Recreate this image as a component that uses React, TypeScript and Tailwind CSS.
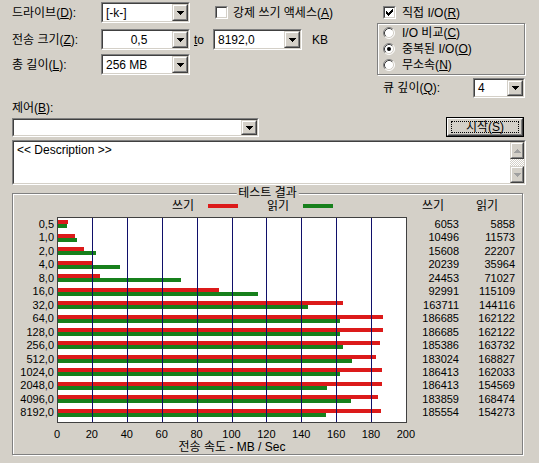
import React from "react";

const F = "font-['Liberation_Sans','Noto_Sans_CJK_KR',sans-serif]";
const SO = "border border-t-[#808080] border-l-[#808080] border-b-white border-r-white";
const SI = "border border-t-[#404040] border-l-[#404040] border-b-[#d4d0c8] border-r-[#d4d0c8]";
const RO = "border border-t-[#d4d0c8] border-l-[#d4d0c8] border-b-[#404040] border-r-[#404040]";
const RI = "border border-t-white border-l-white border-b-[#808080] border-r-[#808080]";

function DownArrow({ color = "#000" }: { color?: string }) {
  return (
    <svg width="7" height="4" viewBox="0 0 7 4" shapeRendering="crispEdges">
      <path d="M0 0h7v1h-1v1h-1v1h-1v1h-1v-1h-1v-1h-1v-1h-1z" fill={color} />
    </svg>
  );
}
function UpArrow({ color = "#000" }: { color?: string }) {
  return (
    <svg width="7" height="4" viewBox="0 0 7 4" shapeRendering="crispEdges">
      <path d="M3 0h1v1h1v1h1v1h1v1h-7v-1h1v-1h1v-1h1z" fill={color} />
    </svg>
  );
}

function DropBtn() {
  return (
    <div className={"w-[16px] h-full flex " + RO}>
      <div className={"flex-1 flex items-center justify-center bg-[#d4d0c8] " + RI}>
        <DownArrow />
      </div>
    </div>
  );
}

function Combo({ className, children, textClass = "" }: { className: string; children?: React.ReactNode; textClass?: string }) {
  return (
    <div className={SO + " " + className}>
      <div className={SI + " h-full flex bg-white"}>
        <div className={"flex-1 flex items-center pl-[3px] text-[12px] leading-none whitespace-nowrap " + textClass}>{children}</div>
        <DropBtn />
      </div>
    </div>
  );
}

function CheckBox({ checked }: { checked?: boolean }) {
  return (
    <div className={SO + " w-[13px] h-[13px] shrink-0"}>
      <div className={SI + " w-full h-full bg-white flex items-center justify-center"}>
        {checked && (
          <svg width="7" height="7" viewBox="0 0 7 7" shapeRendering="crispEdges">
            <path d="M6 0h1v1h-1zM5 1h2v1h-2zM0 2h1v1h-1zM4 2h3v1h-3zM0 3h2v1h-2zM3 3h3v1h-3zM0 4h5v1h-5zM1 5h3v1h-3zM2 6h1v1h-1z" fill="#000" />
          </svg>
        )}
      </div>
    </div>
  );
}

function Radio({ checked }: { checked?: boolean }) {
  return (
    <svg width="12" height="12" viewBox="0 0 12 12" className="shrink-0">
      <circle cx="6" cy="6" r="5" fill="#fff" />
      <path d="M2.11 9.89A5.5 5.5 0 0 1 9.89 2.11" stroke="#808080" strokeWidth="1" fill="none" />
      <path d="M9.89 2.11A5.5 5.5 0 0 1 2.11 9.89" stroke="#ffffff" strokeWidth="1" fill="none" />
      <path d="M2.82 9.18A4.5 4.5 0 0 1 9.18 2.82" stroke="#404040" strokeWidth="1" fill="none" />
      <path d="M9.18 2.82A4.5 4.5 0 0 1 2.82 9.18" stroke="#d4d0c8" strokeWidth="1" fill="none" />
      {checked && <circle cx="6" cy="6" r="2" fill="#000" />}
    </svg>
  );
}

const W = [6053, 10496, 15608, 20239, 24453, 92991, 163711, 186685, 186685, 185386, 183024, 186413, 186413, 183859, 185554];
const R = [5858, 11573, 22207, 35964, 71027, 115109, 144116, 162122, 162122, 163732, 168827, 162033, 154569, 168474, 154273];
const L = ["0,5", "1,0", "2,0", "4,0", "8,0", "16,0", "32,0", "64,0", "128,0", "256,0", "512,0", "1024,0", "2048,0", "4096,0", "8192,0"];
const TICKS = ["0", "20", "40", "60", "80", "100", "120", "140", "160", "180", "200"];
const ROW = 13.46;

function Plot() {
  return (
    <svg width="350" height="206" viewBox="0 0 350 206" className="block shrink-0">
      <rect x="0" y="0" width="350" height="206" fill="#fff" />
      {W.map((w, i) => {
        const c = 7.3 + ROW * i;
        const y = Math.round(c - 4);
        return (
          <g key={i} shapeRendering="crispEdges">
            <rect x="1" y={y} width={Math.round(w * 0.001745) - 1} height="4" fill="#dc1a1a" />
            <rect x="1" y={y + 4} width={Math.round(R[i] * 0.001745) - 1} height="4" fill="#17801c" />
          </g>
        );
      })}
      {[1, 2, 3, 4, 5, 6, 7, 8, 9].map((k) => (
        <line key={k} x1={Math.round(34.9 * k) + 0.5} y1="0" x2={Math.round(34.9 * k) + 0.5} y2="206" stroke="#10106a" strokeWidth="1" />
      ))}
      <rect x="0.5" y="0.5" width="349" height="205" fill="none" stroke="#404040" strokeWidth="1" />
    </svg>
  );
}

export default function App() {
  return (
    <div className={"w-[539px] h-[463px] bg-[#d4d0c8] overflow-hidden text-black text-[12px] " + F}>
      {/* top section */}
      <div className="flex pt-[2px] pl-[12px]">
        <div className="w-[365px]">
          <div className="flex items-center h-[21px]">
            <span className="w-[89px] leading-none">드라이브(<u>D</u>):</span>
            <Combo className="w-[89px] h-[21px]">[-k-]</Combo>
            <div className="ml-[25px] flex items-center">
              <CheckBox />
              <span className="ml-[5px] leading-none">강제 쓰기 액세스(<u>A</u>)</span>
            </div>
          </div>
          <div className="flex items-center h-[21px] mt-[6px]">
            <span className="w-[89px] leading-none">전송 크기(<u>Z</u>):</span>
            <Combo className="w-[89px] h-[21px]" textClass="justify-center">0,5</Combo>
            <span className="ml-[4px] w-[19px] leading-none"><u>t</u>o</span>
            <Combo className="w-[89px] h-[21px]">8192,0</Combo>
            <span className="ml-[10px] leading-none">KB</span>
          </div>
          <div className="flex items-center h-[21px] mt-[4px]">
            <span className="w-[89px] leading-none">총 길이(<u>L</u>):</span>
            <Combo className="w-[89px] h-[21px]">256 MB</Combo>
          </div>
        </div>
        <div className="w-[148px]">
          <div className="flex items-center h-[21px] pl-[6px]">
            <CheckBox checked />
            <span className="ml-[6px] leading-none">직접 I/O(<u>R</u>)</span>
          </div>
          <div className="h-[52px] border border-[#808080] shadow-[inset_1px_1px_0_#fff,1px_1px_0_#fff] pt-[1px] pl-[5px]">
            <div className="flex items-center h-[16px]">
              <Radio />
              <span className="ml-[7px] leading-none">I/O 비교(<u>C</u>)</span>
            </div>
            <div className="flex items-center h-[16px]">
              <Radio checked />
              <span className="ml-[7px] leading-none">중복된 I/O(<u>O</u>)</span>
            </div>
            <div className="flex items-center h-[16px]">
              <Radio />
              <span className="ml-[7px] leading-none">무소속(<u>N</u>)</span>
            </div>
          </div>
          <div className="flex items-center h-[20px] mt-[3px] pl-[6px]">
            <span className="w-[90px] leading-none">큐 깊이(<u>Q</u>):</span>
            <Combo className="w-[52px] h-[20px]">4</Combo>
          </div>
        </div>
      </div>

      {/* control */}
      <div className="pl-[12px] mt-[3px] h-[14px] flex items-center leading-none">제어(<u>B</u>):</div>
      <div className="flex items-start pl-[12px] mt-[2px] h-[20px]">
        <Combo className="w-[247px] h-[19px] mt-[1px]" />
        <div className="ml-[187px] w-[78px] h-[20px] border border-black">
          <div className="w-full h-full border border-t-white border-l-white border-b-[#404040] border-r-[#404040]">
            <div className="w-full h-full border border-transparent border-b-[#808080] border-r-[#808080] px-[2px] py-[1px]">
              <div className="w-full h-full border border-dotted border-black flex items-center justify-center leading-none">
                시작(<u>S</u>)
              </div>
            </div>
          </div>
        </div>
      </div>

      {/* description */}
      <div className={SO + " ml-[12px] mt-[3px] w-[514px] h-[45px]"}>
        <div className={SI + " w-full h-full bg-white flex"}>
          <div className="flex-1 pl-[3px] pt-[1px] leading-[14px]">&lt;&lt; Description &gt;&gt;</div>
          <div className="w-[14px] h-full flex flex-col">
            <div className={"h-[17px] flex " + RO}>
              <div className={"flex-1 flex items-center justify-center bg-[#d4d0c8] " + RI}>
                <UpArrow color="#a0a0a0" />
              </div>
            </div>
            <div className="flex-1 bg-[repeating-conic-gradient(#ffffff_0_25%,#d4d0c8_0_50%)] bg-[length:2px_2px]" />
            <div className={"h-[17px] flex " + RO}>
              <div className={"flex-1 flex items-center justify-center bg-[#d4d0c8] " + RI}>
                <DownArrow color="#a0a0a0" />
              </div>
            </div>
          </div>
        </div>
      </div>

      {/* results group */}
      <div className="relative ml-[12px] mt-[8px] w-[511px] h-[262px] border border-[#808080] shadow-[inset_1px_1px_0_#fff,1px_1px_0_#fff] pt-[5px]">
        <span className="absolute left-1/2 -translate-x-1/2 top-[-8px] px-[2px] bg-[#d4d0c8] leading-[14px] whitespace-nowrap">테스트 결과</span>
        <div className="flex">
          <div className="w-[394px]">
            <div className="h-[14px] flex items-center">
              <span className="w-[159px]" />
              <span className="w-[36px] leading-none">쓰기</span>
              <span className="w-[30px] h-[4px] bg-[#dc1a1a]" />
              <span className="w-[29px]" />
              <span className="w-[36px] leading-none">읽기</span>
              <span className="w-[30px] h-[4px] bg-[#17801c]" />
            </div>
            <div className="flex mt-[4px]">
              <div className="w-[41px] flex flex-col text-[11px] text-right pt-[1px]">
                {L.map((l) => (
                  <div key={l} className="h-[13.46px] leading-[13.46px]">{l}</div>
                ))}
              </div>
              <div className="ml-[3px]">
                <Plot />
              </div>
            </div>
            <div className="flex h-[14px] mt-[4px] ml-[26.55px] text-[11px]">
              {TICKS.map((t) => (
                <div key={t} className="w-[34.9px] shrink-0 text-center leading-[14px]">{t}</div>
              ))}
            </div>
            <div className="ml-[44px] w-[350px] text-center leading-[12px] whitespace-nowrap">전송 속도 - MB / Sec</div>
          </div>
          <div className="w-[52px]">
            <div className="h-[14px] flex items-center justify-center leading-none">쓰기</div>
            <div className="mt-[4px] pt-[1px] flex flex-col text-[11px] text-right">
              {W.map((w, i) => (
                <div key={i} className="h-[13.46px] leading-[13.46px]">{w}</div>
              ))}
            </div>
          </div>
          <div className="w-[56px]">
            <div className="h-[14px] flex items-center justify-center leading-none">읽기</div>
            <div className="mt-[4px] pt-[1px] flex flex-col text-[11px] text-right">
              {R.map((r, i) => (
                <div key={i} className="h-[13.46px] leading-[13.46px]">{r}</div>
              ))}
            </div>
          </div>
        </div>
      </div>
    </div>
  );
}
